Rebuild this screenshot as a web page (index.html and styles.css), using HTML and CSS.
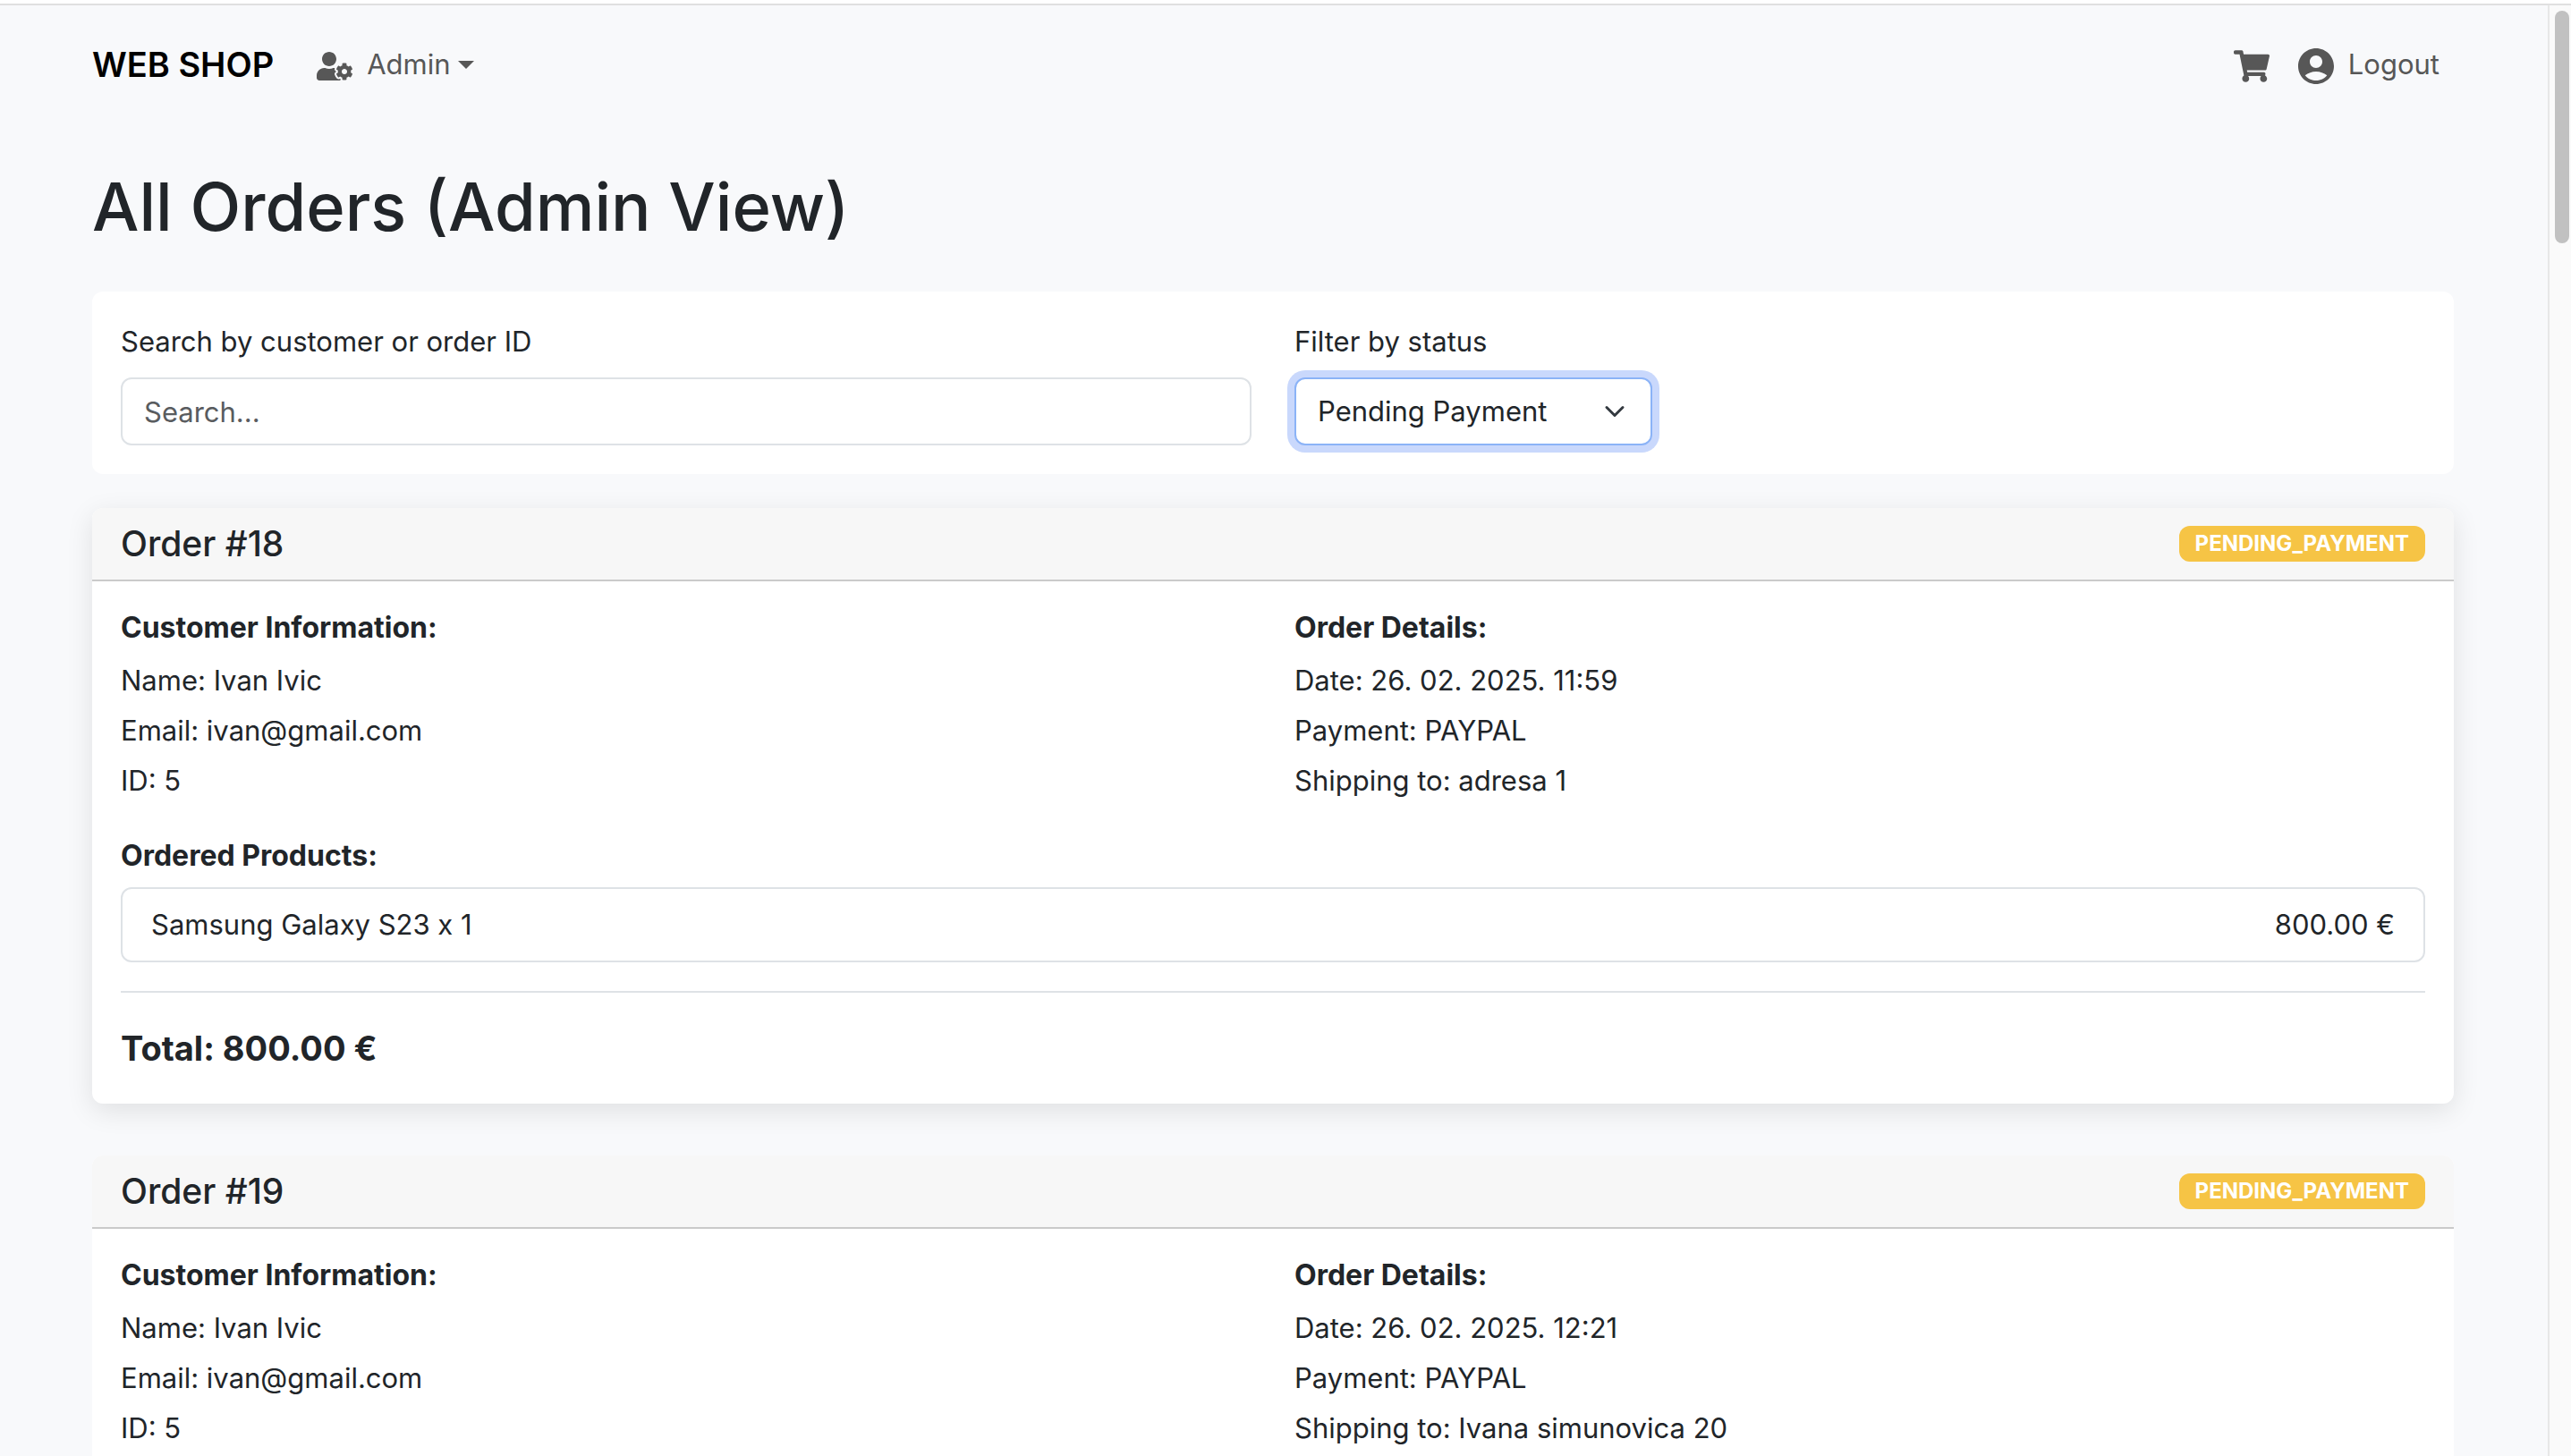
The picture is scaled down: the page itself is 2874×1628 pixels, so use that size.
FILE: index.html
```html
<!DOCTYPE html>
<html lang="en">
<head>
  <meta charset="utf-8">
  <meta name="viewport" content="width=device-width, initial-scale=1">
  <title>Web Shop - All Orders</title>
  <link rel="stylesheet" href="styles.css">
</head>
<body>
  <div class="page">
    <header class="navbar">
      <nav class="container navbar-inner" aria-label="Main">
        <a class="brand" href="#">WEB SHOP</a>
        <button class="nav-item" type="button" aria-haspopup="true">
          <svg class="icon" viewBox="0 0 640 512" aria-hidden="true"><path d="M610.5 373.3c2.6-14.1 2.6-28.5 0-42.6l25.8-14.9c3-1.7 4.3-5.2 3.3-8.5-6.7-21.6-18.2-41.2-33.2-57.4-2.3-2.5-6-3.1-9-1.4l-25.8 14.9c-10.9-9.3-23.4-16.5-36.9-21.3v-29.8c0-3.4-2.4-6.4-5.7-7.1-22.3-5-45-4.8-66.2 0-3.3.7-5.7 3.7-5.7 7.1v29.8c-13.5 4.8-26 12-36.9 21.3l-25.8-14.9c-2.9-1.7-6.7-1.1-9 1.4-15 16.2-26.5 35.8-33.2 57.4-1 3.3.4 6.8 3.3 8.5l25.8 14.9c-2.6 14.1-2.6 28.5 0 42.6l-25.8 14.9c-3 1.7-4.3 5.2-3.3 8.5 6.7 21.6 18.2 41.1 33.2 57.4 2.3 2.5 6 3.1 9 1.4l25.8-14.9c10.9 9.3 23.4 16.5 36.9 21.3v29.8c0 3.4 2.4 6.4 5.7 7.1 22.3 5 45 4.8 66.2 0 3.3-.7 5.7-3.7 5.7-7.1v-29.8c13.5-4.8 26-12 36.9-21.3l25.8 14.9c2.9 1.7 6.7 1.1 9-1.4 15-16.2 26.5-35.8 33.2-57.4 1-3.3-.4-6.8-3.3-8.5l-25.8-14.9zM496 400.5c-26.8 0-48.5-21.8-48.5-48.5s21.8-48.5 48.5-48.5 48.5 21.8 48.5 48.5-21.7 48.5-48.5 48.5zM224 256c70.7 0 128-57.3 128-128S294.7 0 224 0 96 57.3 96 128s57.3 128 128 128zm201.2 226.5c-2.3-1.2-4.6-2.6-6.8-3.9l-7.9 4.6c-6 3.4-12.8 5.3-19.6 5.3-10.9 0-21.4-4.6-28.9-12.6-18.3-19.8-32.3-43.9-40.2-69.6-5.5-17.7 1.9-36.4 17.9-45.7l7.9-4.6c-.1-2.6-.1-5.2 0-7.8l-7.9-4.6c-16-9.2-23.4-28-17.9-45.7.9-2.9 2.2-5.8 3.2-8.7-3.8-.3-7.5-1.2-11.4-1.2h-16.7c-22.2 10.2-46.9 16-72.9 16s-50.6-5.8-72.9-16h-16.7C60.2 288 0 348.2 0 422.4V464c0 26.5 21.5 48 48 48h352c10.1 0 19.5-3.2 27.2-8.5-1.2-3.8-2-7.7-2-11.8v-9.2z"/></svg>
          <span class="nav-label">Admin<span class="caret"></span></span>
        </button>
        <div class="nav-end">
          <a class="nav-item" href="#" aria-label="Cart">
            <svg class="icon" viewBox="0 0 576 512" aria-hidden="true"><path d="M528.12 301.319l47.273-208C578.806 78.301 567.391 64 551.99 64H159.208l-9.166-44.81C147.758 8.021 137.93 0 126.529 0H24C10.745 0 0 10.745 0 24v16c0 13.255 10.745 24 24 24h69.883l70.248 343.435C147.325 417.1 136 435.222 136 456c0 30.928 25.072 56 56 56s56-25.072 56-56c0-15.674-6.447-29.835-16.824-40h209.647C430.447 426.165 424 440.326 424 456c0 30.928 25.072 56 56 56s56-25.072 56-56c0-22.172-12.888-41.332-31.579-50.405l5.517-24.276c3.413-15.018-8.002-29.319-23.403-29.319H218.117l-6.545-32h293.145c11.206 0 20.92-7.754 23.403-18.681z"/></svg>
          </a>
          <a class="nav-item" href="#">
            <svg class="icon" viewBox="2 2 20 20" aria-hidden="true"><path d="M12 2C6.48 2 2 6.48 2 12s4.48 10 10 10 10-4.48 10-10S17.52 2 12 2zm0 4c1.93 0 3.5 1.57 3.5 3.5S13.93 13 12 13s-3.5-1.57-3.5-3.5S10.07 6 12 6zm0 14c-2.03 0-4.43-.82-6.14-2.88C7.55 15.8 9.68 15 12 15s4.45.8 6.14 2.12C16.43 19.18 14.03 20 12 20z"/></svg>
            <span class="nav-label">Logout</span>
          </a>
        </div>
      </nav>
    </header>

    <main class="container content">
      <h1 class="title">All Orders (Admin View)</h1>

      <form class="filters">
        <div class="field">
          <label for="search">Search by customer or order ID</label>
          <input class="control" id="search" type="text" placeholder="Search...">
        </div>
        <div class="field">
          <label for="status">Filter by status</label>
          <div class="select">
            <select class="control control-active" id="status">
              <option selected>Pending Payment</option>
            </select>
            <svg class="chevron" viewBox="0 0 16 16" aria-hidden="true"><path d="m2 5 6 6 6-6"/></svg>
          </div>
        </div>
      </form>

      <article class="card card-raised">
        <header class="card-header">
          <h2 class="card-title">Order #18</h2>
          <span class="badge">PENDING_PAYMENT</span>
        </header>
        <div class="card-body">
          <div class="details">
            <section>
              <h3 class="subtitle">Customer Information:</h3>
              <p>Name: Ivan Ivic</p>
              <p>Email: ivan@gmail.com</p>
              <p>ID: 5</p>
            </section>
            <section>
              <h3 class="subtitle">Order Details:</h3>
              <p>Date: 26. 02. 2025. 11:59</p>
              <p>Payment: PAYPAL</p>
              <p>Shipping to: adresa 1</p>
            </section>
          </div>
          <section class="products">
            <h3 class="subtitle">Ordered Products:</h3>
            <ul class="product-list">
              <li><span>Samsung Galaxy S23 x 1</span><span>800.00 €</span></li>
            </ul>
          </section>
          <strong class="total">Total: 800.00 €</strong>
        </div>
      </article>

      <article class="card">
        <header class="card-header">
          <h2 class="card-title">Order #19</h2>
          <span class="badge">PENDING_PAYMENT</span>
        </header>
        <div class="card-body">
          <div class="details">
            <section>
              <h3 class="subtitle">Customer Information:</h3>
              <p>Name: Ivan Ivic</p>
              <p>Email: ivan@gmail.com</p>
              <p>ID: 5</p>
            </section>
            <section>
              <h3 class="subtitle">Order Details:</h3>
              <p>Date: 26. 02. 2025. 12:21</p>
              <p>Payment: PAYPAL</p>
              <p>Shipping to: Ivana simunovica 20</p>
            </section>
          </div>
        </div>
      </article>
    </main>
  </div>
  <div class="scrollbar" aria-hidden="true"><div class="thumb"></div></div>
</body>
</html>
```
FILE: styles.css
```css
*,
*::before,
*::after {
  box-sizing: border-box;
}

body {
  margin: 0;
  height: 100vh;
  display: grid;
  grid-template-columns: minmax(0, 1fr) 26px;
  column-gap: 2px;
  overflow: hidden;
  border-top: 6px solid #e0e0e0;
  border-image: linear-gradient(#fff 4px, #e0e0e0 4px) 6;
  background: #f8f9fb;
  color: #212529;
  font-family: Inter, "Liberation Sans", sans-serif;
  font-size: 31px;
  line-height: 48px;
}

h1,
h2,
h3,
p,
ul {
  margin: 0;
  padding: 0;
}

.page {
  overflow-y: auto;
  scrollbar-width: none;
}

.container {
  width: 100%;
  max-width: 2640px;
  margin: 0 auto;
}

/* Navigation */
.navbar {
  padding: 26px 0 24px;
}

.navbar-inner {
  display: flex;
  align-items: center;
  gap: 48px;
  min-height: 80px;
}

.brand {
  color: #000;
  font-size: 38px;
  font-weight: 600;
  line-height: 60px;
  text-decoration: none;
}

.nav-item {
  display: flex;
  align-items: center;
  gap: 16px;
  padding: 0;
  border: 0;
  background: none;
  color: #575757;
  font: inherit;
  text-decoration: none;
}

.nav-label {
  display: flex;
  align-items: center;
  gap: 8px;
}

.nav-end {
  display: flex;
  gap: 32px;
  margin-left: auto;
  padding-right: 16px;
}

.icon {
  width: 40px;
  height: 40px;
  margin-top: 4px;
  fill: currentColor;
}

.caret {
  border: 9px solid transparent;
  border-top-color: currentColor;
  border-bottom: 0;
}

/* Page content */
.content {
  display: flex;
  flex-direction: column;
  gap: 48px;
  padding: 48px 0;
}

.title {
  font-size: 74px;
  font-weight: 500;
  line-height: 94px;
}

.filters,
.details {
  display: grid;
  grid-template-columns: 1fr 1fr;
  column-gap: 48px;
}

.filters {
  padding: 32px;
  border-radius: 12px;
  background: #fff;
}

.field {
  display: grid;
  gap: 16px;
}

.select {
  display: grid;
  width: 400px;
}

.control {
  width: 100%;
  height: 76px;
  padding: 0 24px;
  border: 2px solid #dee2e6;
  border-radius: 12px;
  outline: 0;
  background: #fff;
  color: #212529;
  font: inherit;
  appearance: none;
}

.control::placeholder {
  color: #595c5f;
  opacity: 1;
}

.control:focus,
.control-active {
  border-color: #8bb3f7;
  box-shadow: 0 0 0 8px #c9d8fc;
}

.select .control,
.chevron {
  grid-area: 1 / 1;
}

.chevron {
  width: 24px;
  height: 24px;
  margin-right: 30px;
  place-self: center end;
  fill: none;
  stroke: #343a40;
  stroke-width: 2;
  stroke-linecap: round;
  stroke-linejoin: round;
  pointer-events: none;
}

/* Order cards */
.card {
  border-radius: 12px;
  background: #fff;
}

.card-raised {
  margin: -10px 0 10px;
  box-shadow: 0 8px 30px rgba(0, 0, 0, 0.1);
}

.card-header {
  display: flex;
  align-items: center;
  justify-content: space-between;
  padding: 16px 32px;
  border-bottom: 2px solid #cacaca;
  border-radius: 12px 12px 0 0;
  background: #f7f7f7;
}

.card-title {
  font-size: 39px;
  font-weight: 500;
  line-height: 48px;
}

.badge {
  padding: 8px 18px;
  border-radius: 12px;
  background: #f6c445;
  color: #fff;
  font-size: 24px;
  font-weight: 700;
  line-height: 24px;
}

.card-body {
  display: grid;
  gap: 32px;
  padding: 32px;
}

.subtitle {
  margin-bottom: 16px;
  font-size: 32px;
  font-weight: 700;
  line-height: 39px;
}

.details p {
  margin-bottom: 8px;
}

.product-list {
  border: 2px solid #dee2e6;
  border-radius: 12px;
  list-style: none;
  font-feature-settings: "calt" 0;
}

.product-list li {
  display: flex;
  justify-content: space-between;
  padding: 16px 32px;
}

.total {
  padding-top: 32px;
  border-top: 2px solid #dee2e6;
  font-size: 38px;
  line-height: 60px;
}

/* Scrollbar track */
.scrollbar {
  border-left: 2px solid #e7e7e7;
  padding: 6px 0 0 6px;
  background: #fafafa;
}

.thumb {
  width: 16px;
  height: 16vh;
  border-radius: 8px;
  background: #c1c1c1;
}
```
